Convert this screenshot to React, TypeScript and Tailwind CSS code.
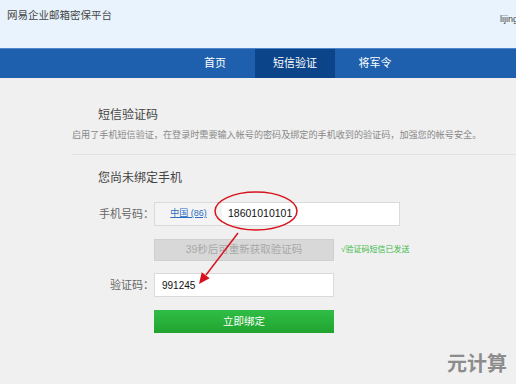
import React from 'react';

// 网易企业邮箱密保平台 - 短信验证页
const tabs = [
  { label: '首页', active: false },
  { label: '短信验证', active: true },
  { label: '将军令', active: false },
];

export default function App() {
  return (
    <div
      className="relative w-[516px] h-[384px] overflow-hidden bg-[#f0f0f0] text-[#444]"
      style={{ fontFamily: '"Liberation Sans", "Noto Sans CJK SC", sans-serif' }}
    >
      {/* 顶部 */}
      <div className="flex h-[48px] bg-[#e9f3fd] overflow-hidden">
        <div className="w-[500px] shrink-0 pl-[7px] pt-[8px] text-[10.5px] leading-[14px] text-[#444]">
          网易企业邮箱密保平台
        </div>
        <div className="shrink-0 whitespace-nowrap pt-[13px] text-[9px] text-[#444]">lijing</div>
      </div>

      {/* 导航 */}
      <div className="flex h-[30px] bg-[#1e5fae] border-t border-[#4f86c8]">
        <div className="w-[175px]" />
        {tabs.map(tab => (
          <div
            key={tab.label}
            className={
              tab.active
                ? 'w-[80px] text-center text-[11px] leading-[29px] text-white bg-[#0b4488]'
                : 'w-[80px] text-center text-[11px] leading-[29px] text-white'
            }
          >
            {tab.label}
          </div>
        ))}
      </div>

      {/* 内容 */}
      <div className="pl-[72px]">
        <div className="mt-[29px] pl-[26px] text-[12px] leading-[16px] text-[#444]">短信验证码</div>
        <div className="mt-[6px] text-[9.1px] leading-[12px] text-[#888] whitespace-nowrap">
          启用了手机短信验证，在登录时需要输入帐号的密码及绑定的手机收到的验证码，加强您的帐号安全。
        </div>
        <div className="mt-[13px] border-t border-[#e2e2e2]" />

        <div className="mt-[15px] pl-[26px] text-[12px] leading-[16px] text-[#444]">您尚未绑定手机</div>

        {/* 手机号码 */}
        <div className="mt-[16px] flex items-center">
          <div className="w-[82px] text-right text-[11px] text-[#666]">手机号码：</div>
          <div className="flex h-[24px] w-[246px] border border-[#dadada]">
            <div className="flex w-[67px] items-center justify-center bg-[#f4f4f4] text-[9px] text-[#2a6cc0] underline">
              中国 (86)
            </div>
            <div className="flex flex-1 items-center bg-white pl-[6px] text-[10.5px] text-[#111]">18601010101</div>
          </div>
        </div>

        {/* 倒计时 */}
        <div className="mt-[13px] flex items-center">
          <div className="ml-[82px] flex h-[22px] w-[180px] items-center justify-center border border-[#cfcfcf] bg-[#d8d8d8] text-[10.5px] text-[#a8a8a8]">
            39秒后可重新获取验证码
          </div>
          <div className="ml-[7px] text-[8px] text-[#3cb846]">√验证码短信已发送</div>
        </div>

        {/* 验证码 */}
        <div className="mt-[12px] flex items-center">
          <div className="w-[82px] text-right text-[11px] text-[#666]">验证码：</div>
          <div className="flex h-[24px] w-[180px] items-center border border-[#dadada] bg-white pl-[7px] text-[10px] text-[#111]">
            991245
          </div>
        </div>

        {/* 立即绑定 */}
        <div className="mt-[13px] ml-[82px] flex h-[23px] w-[180px] items-center justify-center bg-gradient-to-b from-[#2fbd46] to-[#21a42f] text-[10.5px] text-white">
          立即绑定
        </div>
      </div>

      {/* 红色标注 */}
      <svg className="pointer-events-none absolute left-0 top-0" width="516" height="384">
        <ellipse cx="256" cy="211" rx="41" ry="19" fill="none" stroke="#d8121c" strokeWidth="1.5" />
        <line x1="238" y1="233" x2="206" y2="275" stroke="#d8121c" strokeWidth="1.5" />
        <polygon points="199,284 209.7,278.3 201.7,272.3" fill="#d8121c" />
      </svg>

      {/* 水印 */}
      <div className="absolute left-[447px] top-[352px] text-[20px] font-bold leading-[24px] text-[#8c8c8c]">
        元计算
      </div>
    </div>
  );
}
